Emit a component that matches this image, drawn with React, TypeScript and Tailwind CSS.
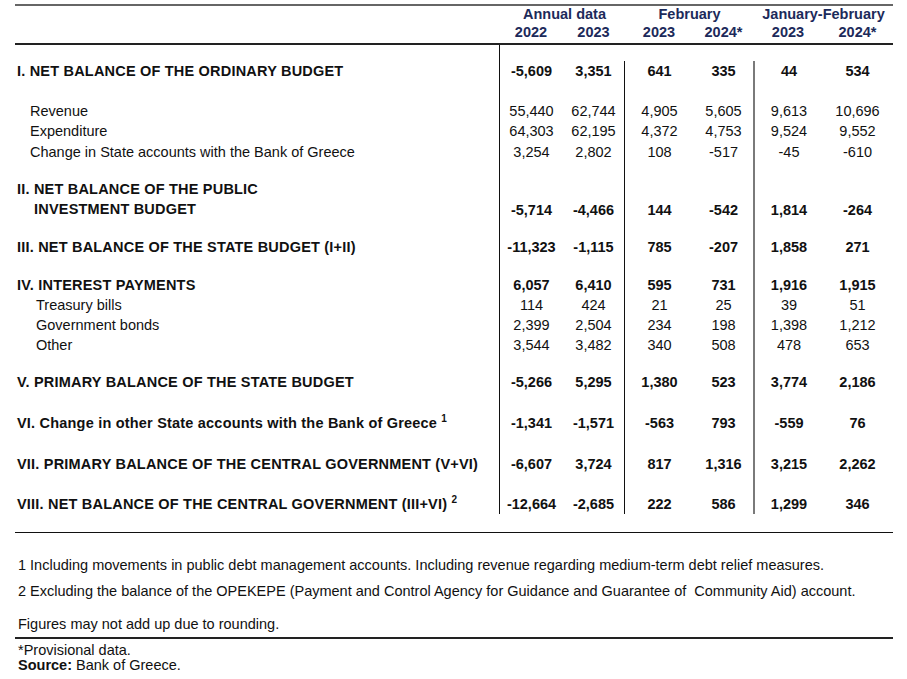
import React from "react";

type Row = {
  label: React.ReactNode;
  vals?: string[];
  bold?: boolean;
  indent?: string;
  h: string;
  items?: string;
};

const G = "grid grid-cols-[484px_64px_61px_70px_59px_70px_69px]";

function Cells({ vals, bold, items }: { vals?: string[]; bold?: boolean; items?: string }) {
  const borders = ["border-l border-[#111]", "", "border-l border-[#111]", "", "border-l-2 border-[#7a7a7a]", ""];
  return (
    <>
      {borders.map((b, i) => (
        <div key={i} className={`${b} flex ${items ?? "items-center"} justify-center ${bold ? "font-bold" : ""}`}>
          {vals ? vals[i] : ""}
        </div>
      ))}
    </>
  );
}

function Gap({ h }: { h: string }) {
  return (
    <div className={`${G} ${h}`}>
      <div />
      <Cells />
    </div>
  );
}

export default function App() {
  const rows: (Row | { gap: string })[] = [
    { label: "I. NET BALANCE OF THE ORDINARY BUDGET", bold: true, h: "h-[20px]", vals: ["-5,609", "3,351", "641", "335", "44", "534"] },
    { gap: "h-[20px]" },
    { label: "Revenue", indent: "pl-[15px]", h: "h-[20px]", vals: ["55,440", "62,744", "4,905", "5,605", "9,613", "10,696"] },
    { label: "Expenditure", indent: "pl-[15px]", h: "h-[21px]", vals: ["64,303", "62,195", "4,372", "4,753", "9,524", "9,552"] },
    { label: "Change in State accounts with the Bank of Greece", indent: "pl-[15px]", h: "h-[20px]", vals: ["3,254", "2,802", "108", "-517", "-45", "-610"] },
    { gap: "h-[17px]" },
    {
      label: (
        <div className="flex flex-col">
          <span className="h-[20px] flex items-center">II. NET BALANCE OF THE PUBLIC</span>
          <span className="h-[20px] flex items-center pl-[17px]">INVESTMENT BUDGET</span>
        </div>
      ),
      bold: true,
      h: "h-[40px]",
      items: "items-end pb-[2px]",
      vals: ["-5,714", "-4,466", "144", "-542", "1,814", "-264"],
    },
    { gap: "h-[18px]" },
    { label: "III. NET BALANCE OF THE STATE BUDGET (I+II)", bold: true, h: "h-[20px]", vals: ["-11,323", "-1,115", "785", "-207", "1,858", "271"] },
    { gap: "h-[18px]" },
    { label: "IV. INTEREST PAYMENTS", bold: true, h: "h-[20px]", vals: ["6,057", "6,410", "595", "731", "1,916", "1,915"] },
    { label: "Treasury bills", indent: "pl-[21px]", h: "h-[21px]", vals: ["114", "424", "21", "25", "39", "51"] },
    { label: "Government bonds", indent: "pl-[21px]", h: "h-[19px]", vals: ["2,399", "2,504", "234", "198", "1,398", "1,212"] },
    { label: "Other", indent: "pl-[21px]", h: "h-[20px]", vals: ["3,544", "3,482", "340", "508", "478", "653"] },
    { gap: "h-[17px]" },
    { label: "V. PRIMARY BALANCE OF THE STATE BUDGET", bold: true, h: "h-[20px]", vals: ["-5,266", "5,295", "1,380", "523", "3,774", "2,186"] },
    { gap: "h-[21px]" },
    {
      label: (
        <span>
          VI. Change in other State accounts with the Bank of Greece <sup className="text-[10px] font-bold relative -top-[6px]">1</sup>
        </span>
      ),
      bold: true,
      h: "h-[20px]",
      vals: ["-1,341", "-1,571", "-563", "793", "-559", "76"],
    },
    { gap: "h-[21px]" },
    { label: "VII. PRIMARY BALANCE OF THE CENTRAL GOVERNMENT (V+VI)", bold: true, h: "h-[20px]", vals: ["-6,607", "3,724", "817", "1,316", "3,215", "2,262"] },
    { gap: "h-[20px]" },
    {
      label: (
        <span>
          VIII. NET BALANCE OF THE CENTRAL GOVERNMENT (III+VI) <sup className="text-[10px] font-bold relative -top-[6px]">2</sup>
        </span>
      ),
      bold: true,
      h: "h-[20px]",
      vals: ["-12,664", "-2,685", "222", "586", "1,299", "346"],
    },
  ];

  return (
    <div className="w-[907px] h-[679px] bg-white text-[#111] text-[14.5px] leading-none" style={{ fontFamily: '"Liberation Sans", Arial, sans-serif' }}>
      <div className="pl-[15px] pr-[14px] pt-[4px]">
        {/* header */}
        <div className="border-t-2 border-[#666] border-b-2 border-b-[#222]">
          <div className={`${G} text-[#1c2a5a] font-bold h-[37px]`}>
            <div />
            <div className="col-span-2 flex flex-col items-center">
              <div className="h-[17px] flex items-center pl-[6px]">Annual data</div>
              <div className="grid grid-cols-[64px_61px] w-full">
                <div className="h-[19px] flex items-center justify-center">2022</div>
                <div className="h-[19px] flex items-center justify-center">2023</div>
              </div>
            </div>
            <div className="col-span-2 flex flex-col items-center">
              <div className="h-[17px] flex items-center pl-[2px]">February</div>
              <div className="grid grid-cols-[70px_59px] w-full">
                <div className="h-[19px] flex items-center justify-center">2023</div>
                <div className="h-[19px] flex items-center justify-center">2024*</div>
              </div>
            </div>
            <div className="col-span-2 flex flex-col items-center">
              <div className="h-[17px] flex items-center pl-[2px]">January-February</div>
              <div className="grid grid-cols-[70px_69px] w-full">
                <div className="h-[19px] flex items-center justify-center">2023</div>
                <div className="h-[19px] flex items-center justify-center">2024*</div>
              </div>
            </div>
          </div>
        </div>
        {/* body */}
        <div className={`${G} h-[16px]`}>
          <div />
          <div className="border-l border-[#111]" />
        </div>
        {rows.map((r, i) => {
          if ("gap" in r) return <Gap key={i} h={r.gap} />;
          return (
            <div key={i} className={`${G} ${r.h}`}>
              <div className={`flex items-center pl-[2px] ${r.indent ?? ""} ${r.bold ? "font-bold tracking-[0.2px]" : ""}`}>{r.label}</div>
              <Cells vals={r.vals} bold={r.bold} items={r.items} />
            </div>
          );
        })}
        <div className="h-[19px] border-b border-[#111]" />
        <div className="pl-[3px] pt-[24px]">
          <div className="h-[16px] flex items-center">1 Including movements in public debt management accounts. Including revenue regarding medium-term debt relief measures.</div>
          <div className="h-[16px] mt-[10px] flex items-center whitespace-pre">2 Excluding the balance of the OPEKEPE (Payment and Control Agency for Guidance and Guarantee of  Community Aid) account.</div>
          <div className="h-[16px] mt-[17px] flex items-center">Figures may not add up due to rounding.</div>
        </div>
        <div className="mt-[5px] border-t-2 border-[#222] pl-[3px]">
          <div className="h-[18px] flex items-end">*Provisional data.</div>
          <div className="h-[17px] flex items-center">
            <span className="font-bold">Source:</span>&nbsp;Bank of Greece.
          </div>
        </div>
      </div>
    </div>
  );
}
